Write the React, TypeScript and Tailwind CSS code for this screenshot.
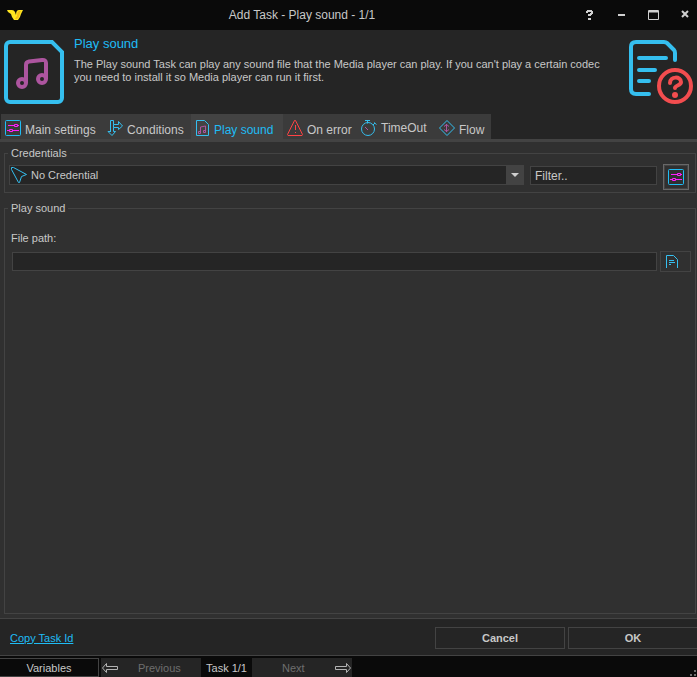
import type { ReactNode } from "react";

function LogoIcon() {
  return (
    <svg width="16" height="12" viewBox="0 0 16 12" aria-hidden="true">
      <path d="M0 1h5q2 0 3 2l1 3q0-5 3-5h4l-1 2-1 2-1 3-2 3H7L5 8 4 5 1 3z" fill="#ffe51f" />
      <path d="M10 7q0-4 2-5h2l-1 2-1 4-2 2H8z" fill="#f3bd16" />
    </svg>
  );
}

function MusicFileIcon() {
  return (
    <svg width="60" height="64" viewBox="0 0 60 64" fill="none" aria-hidden="true">
      <path d="M6 2h42l10 10v46a4 4 0 0 1-4 4H6a4 4 0 0 1-4-4V6a4 4 0 0 1 4-4z" stroke="#35bfef" strokeWidth="4" />
      <g stroke="#ad559f" strokeWidth="4">
        <circle cx="18" cy="43" r="4" />
        <circle cx="38" cy="39" r="4" />
        <path d="M22 43V25q0-3 3-3.500l13-1.500q4-.5 4 3v16" />
      </g>
    </svg>
  );
}

function HelpDocIcon() {
  return (
    <svg width="64" height="64" viewBox="0 0 64 64" fill="none" strokeLinecap="round" aria-hidden="true">
      <path d="M20 54H7q-5 0-5-5V7q0-5 5-5h28q2 0 3 1l7 7q1 1 1 3v7M10 18h27M10 30h16M10 41h10" stroke="#35bfef" strokeWidth="4" />
      <circle cx="46" cy="46" r="16" stroke="#f34d4f" strokeWidth="4" />
      <path d="M41 43c0-7 11-7 11-1 0 4-6 3-6 6" stroke="#f34d4f" strokeWidth="4" />
      <circle cx="46" cy="55" r="3" fill="#f34d4f" />
    </svg>
  );
}

function SlidersIcon() {
  return (
    <svg width="16" height="16" viewBox="0 0 16 16" fill="none" aria-hidden="true">
      <rect x=".5" y=".5" width="15" height="15" rx="1" stroke="#20bcf5" />
      <path d="M3 5.500h6M12.500 5.500H14M2 10.500h2M7.500 10.500H14M9.500 4.500h3v2h-3zM4.500 9.500h3v2h-3z" stroke="#ff1dff" />
    </svg>
  );
}

function ConditionsIcon() {
  return (
    <svg width="16" height="16" viewBox="0 0 16 16" fill="none" stroke="#35bfef" aria-hidden="true">
      <path d="M3.500 12V.5h3v4h5v-3L15.500 6l-4 3.500v-2h-5v4h2l-3.500 4-4-4h3M6.500 4.500v3" />
    </svg>
  );
}

function SmallMusicIcon() {
  return (
    <svg width="15" height="16" viewBox="0 0 15 16" fill="none" aria-hidden="true">
      <path d="M1.500.5h8l4 4v11h-12z" stroke="#35bfef" />
      <path d="M5.500 12v-5l5-1v5M3.500 11.500h2v2h-2zM8.500 10.500h2v2h-2z" stroke="#ad559f" />
    </svg>
  );
}

function WarningIcon() {
  return (
    <svg width="16" height="16" viewBox="0 0 16 16" fill="none" stroke="#ff4245" aria-hidden="true">
      <path d="M7.500.5h1l7 14-.5 1H1l-.5-1zM8.500 5v5M8.500 12v1" />
    </svg>
  );
}

function TimerIcon() {
  return (
    <svg width="16" height="16" viewBox="0 0 16 16" fill="none" stroke="#35bfef" aria-hidden="true">
      <circle cx="7" cy="9" r="6.500" />
      <path d="M4 .5h5M6.500.5v3M12 5l2-2M13 2.500l2.500 2" />
      <path d="M4 7l3 3" stroke="#ad559f" />
    </svg>
  );
}

function FlowIcon() {
  return (
    <svg width="16" height="16" viewBox="0 0 16 16" fill="none" aria-hidden="true">
      <path d="M8 .5L15.500 8 8 15.500.5 8z" stroke="#35bfef" />
      <path d="M7.500 4v8M5 6.500l2.500-2 2.500 2M5 9.500l2.500 2 2.500-2" stroke="#ad559f" />
    </svg>
  );
}

function PointerIcon() {
  return (
    <svg width="16" height="16" viewBox="0 0 16 16" fill="none" aria-hidden="true">
      <path d="M.5.5h2l13 7-5 2-2 6h-1L.5 2.500z" stroke="#35bfef" />
    </svg>
  );
}

function DocumentIcon() {
  return (
    <svg width="13" height="14" viewBox="0 0 13 14" fill="none" aria-hidden="true">
      <path d="M.5 13V.5h7l4 4V13M3 5.500h5M3 7.500h6M3 9.500h2" stroke="#35bfef" />
    </svg>
  );
}

function ArrowIcon({ flip = false }: { flip?: boolean }) {
  return (
    <svg width="16" height="10" viewBox="0 0 16 10" fill="none" stroke="#b4b4b4" aria-hidden="true">
      {flip ? (
        <path d="M.5 3.500h11v-3L15.500 5l-4 4.500v-3H.5z" />
      ) : (
        <path d="M15.500 3.500h-11v-3L.5 5l4 4.500v-3h11z" />
      )}
    </svg>
  );
}

function Tab({ icon, label, width, active = false, raised = false }: {
  icon: ReactNode;
  label: string;
  width: string;
  active?: boolean;
  raised?: boolean;
}) {
  return (
    <button
      type="button"
      role="tab"
      aria-selected={active}
      className={`flex h-full shrink-0 items-center gap-1 whitespace-nowrap pl-1 pt-1 text-[12px] leading-4 ${width} ${
        active ? "bg-[#434343] text-[#1fbcf5]" : "text-[#c8c8c8]"
      }`}
    >
      <span className="pb-[2px]">{icon}</span>
      <span className={raised ? "pb-[2px]" : "pt-[2px]"}>{label}</span>
    </button>
  );
}

export default function App() {
  return (
    <div className="flex h-screen flex-col overflow-hidden bg-[#303030] font-['Liberation_Sans',Arial,sans-serif] text-[11px] leading-[14px] text-[#c8c8c8]">
      <header className="flex h-[30px] shrink-0 items-center bg-[#0a0a0a] pl-[7px]">
        <div className="w-6">
          <LogoIcon />
        </div>
        <h1 className="flex-1 text-center text-[12px]">Add Task - Play sound - 1/1</h1>
        <div className="flex">
          <button type="button" aria-label="Help" className="flex h-7 w-8 items-center justify-center">
            <svg width="7" height="10" viewBox="0 0 7 10" fill="#d0d0d0" aria-hidden="true">
              <path d="M1 0h5v1h1v3H6v1H5v1H2V4h2V3h1V2H2v1H0V1h1zM2 8h3v2H2z" />
            </svg>
          </button>
          <button type="button" aria-label="Minimize" className="flex h-7 w-8 items-center justify-center">
            <svg width="7" height="2" aria-hidden="true"><path d="M0 0h7v2H0z" fill="#d0d0d0" /></svg>
          </button>
          <button type="button" aria-label="Maximize" className="flex h-7 w-8 items-center justify-center">
            <svg width="11" height="10" viewBox="0 0 11 10" fill="none" stroke="#d0d0d0" aria-hidden="true">
              <path d="M.5.5h10v9H.5zM0 1.500h11M0 2h11" />
            </svg>
          </button>
          <button type="button" aria-label="Close" className="flex h-7 w-7 items-center justify-center pb-[2px] pl-1">
            <svg width="8" height="8" viewBox="0 0 8 8" stroke="#d0d0d0" strokeWidth="2" aria-hidden="true">
              <path d="M1 1l6 6M7 1L1 7" />
            </svg>
          </button>
        </div>
      </header>

      <section className="flex h-[84px] shrink-0 bg-[#252525] pl-1 pr-1 pt-[10px]">
        <MusicFileIcon />
        <div className="min-w-0 flex-1 pl-[10px] pr-4">
          <h2 className="-mt-1 text-[13px] leading-4 text-[#1fbcf5]">Play sound</h2>
          <p className="mt-[6px] leading-[13px]">
            The Play sound Task can play any sound file that the Media player can play. If you can't play a certain codec you need to install it so Media player can run it first.
          </p>
        </div>
        <HelpDocIcon />
      </section>

      <nav className="flex h-7 shrink-0 border-b-3 border-[#434343] bg-[#252525] pl-px">
        <div role="tablist" className="flex bg-[#3b3b3b]">
          <Tab icon={<SlidersIcon />} label="Main settings" width="w-[102px]" />
          <Tab icon={<ConditionsIcon />} label="Conditions" width="w-[88px]" />
          <Tab icon={<SmallMusicIcon />} label="Play sound" width="w-[92px]" active />
          <Tab icon={<WarningIcon />} label="On error" width="w-[74px]" />
          <Tab icon={<TimerIcon />} label="TimeOut" width="w-[78px]" raised />
          <Tab icon={<FlowIcon />} label="Flow" width="w-14" />
        </div>
      </nav>

      <main className="flex min-h-0 flex-1 flex-col pb-1 pl-1 pr-px pt-1">
        <fieldset className="shrink-0 border border-[#434343] pb-[2px] pl-1 pr-[6px] pt-1">
          <legend className="-ml-px px-[3px] leading-[14px]">Credentials</legend>
          <div className="flex items-center gap-[6px]">
            <div className="relative mb-1 h-5 min-w-0 flex-1">
              <select
                aria-label="Credential"
                className="h-5 w-full appearance-none rounded-none border border-[#434343] bg-[#252525] pb-px pl-[21px] leading-[14px] outline-none"
              >
                <option>No Credential</option>
              </select>
              <span className="pointer-events-none absolute left-[2px] top-[2px]">
                <PointerIcon />
              </span>
              <span className="pointer-events-none absolute right-0 top-0 flex h-5 w-[18px] items-center justify-center bg-[#434343]">
                <svg width="8" height="4" aria-hidden="true"><path d="M0 0h8L4 4z" fill="#d0d0d0" /></svg>
              </span>
            </div>
            <input
              aria-label="Filter"
              defaultValue="Filter.."
              className="mb-[3px] h-[19px] w-[127px] border border-[#434343] bg-[#252525] px-1 text-[12px] outline-none"
            />
            <button
              type="button"
              aria-label="Manage credentials"
              className="flex size-[26px] items-center justify-center border border-[#686868] bg-[#303030] ring-1 ring-inset ring-[#434343]"
            >
              <SlidersIcon />
            </button>
          </div>
        </fieldset>

        <fieldset className="mt-2 min-h-0 flex-1 border border-[#434343] pl-[7px] pr-1">
          <legend className="-ml-1 px-[3px] leading-[14px]">Play sound</legend>
          <label htmlFor="file-path" className="-ml-px mt-4 block">File path:</label>
          <div className="mt-[6px] flex items-center gap-[3px]">
            <input
              id="file-path"
              className="h-[19px] min-w-0 flex-1 border border-[#434343] bg-[#252525] px-1 outline-none"
            />
            <button
              type="button"
              aria-label="Browse"
              className="flex h-[21px] w-[31px] items-center border border-[#434343] pl-[5px]"
            >
              <DocumentIcon />
            </button>
          </div>
        </fieldset>
      </main>

      <section className="flex h-[38px] shrink-0 items-center border-y border-[#434343] bg-[#252525] pl-[10px] pt-px">
        <a href="#copy" className="text-[#1fbcf5] underline">Copy Task Id</a>
        <div className="ml-auto flex gap-[3px] font-bold">
          <button type="button" className="h-[22px] w-[130px] border border-[#434343]">Cancel</button>
          <button type="button" className="h-[22px] w-[129px] border border-r-0 border-[#434343]">OK</button>
        </div>
      </section>

      <footer className="flex h-[21px] shrink-0 items-end bg-[#0a0a0a]">
        <button type="button" className="h-[19px] w-[99px] border border-l-0 border-[#434343]">Variables</button>
        <button type="button" disabled className="ml-[2px] flex h-[19px] w-[100px] items-center gap-5 bg-[#252525] pl-px text-[#6e6e6e]">
          <ArrowIcon />
          Previous
        </button>
        <span className="w-[51px] pb-[2px] text-center">Task 1/1</span>
        <button type="button" disabled className="flex h-[19px] w-[100px] items-center justify-between bg-[#252525] pl-[30px] pr-px text-[#6e6e6e]">
          Next
          <ArrowIcon flip />
        </button>
        <svg className="ml-auto" width="8" height="8" viewBox="0 0 8 8" fill="#6e6e6e" aria-hidden="true">
          <path d="M5 1h2v2H5zM5 5h2v2H5zM1 5h2v2H1z" />
        </svg>
      </footer>
    </div>
  );
}
